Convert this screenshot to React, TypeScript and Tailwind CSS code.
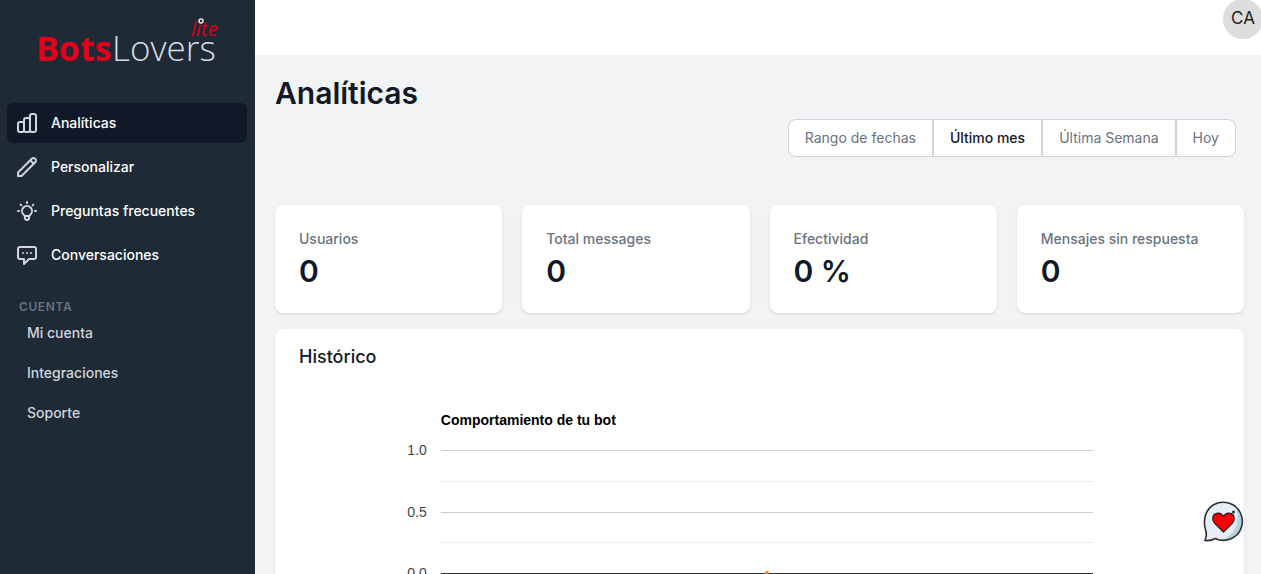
import React from 'react';
import {
  HiOutlineChartBar,
  HiOutlinePencil,
  HiOutlineLightBulb,
  HiOutlineChatAlt,
} from 'react-icons/hi';

const navigation = [
  { name: 'Analíticas', icon: HiOutlineChartBar, current: true },
  { name: 'Personalizar', icon: HiOutlinePencil, current: false },
  { name: 'Preguntas frecuentes', icon: HiOutlineLightBulb, current: false },
  { name: 'Conversaciones', icon: HiOutlineChatAlt, current: false },
];

const account = ['Mi cuenta', 'Integraciones', 'Soporte'];

const ranges = ['Rango de fechas', 'Último mes', 'Última Semana', 'Hoy'];

const stats = [
  { name: 'Usuarios', value: '0' },
  { name: 'Total messages', value: '0' },
  { name: 'Efectividad', value: '0 %' },
  { name: 'Mensajes sin respuesta', value: '0' },
];

const gridLines = [
  { y: 69, label: '1.0', color: '#cccccc' },
  { y: 100, label: '', color: '#ebebeb' },
  { y: 131, label: '0.5', color: '#cccccc' },
  { y: 161, label: '', color: '#ebebeb' },
  { y: 192, label: '0.0', color: '#333333' },
];

function Logo() {
  return (
    <svg width="190" height="56" className="block font-['Open_Sans',sans-serif]" role="img" aria-label="BotsLovers lite">
      <text x="1" y="47" fontSize="34" fontWeight="700" fill="#e2001a">Bots</text>
      <text x="77" y="47" fontSize="35" fontWeight="300" fill="#d9dde1">Lovers</text>
      <text x="156" y="22" fontSize="20" fontStyle="italic" fontWeight="400" fill="#d9001b">lite</text>
      <circle cx="166" cy="7" r="2" fill="#1f2937" stroke="#e5e7eb" strokeWidth="1.5" />
    </svg>
  );
}

function Sidebar() {
  return (
    <aside className="w-[255px] shrink-0 bg-[#1e2a35] pl-[7px] pr-2">
      <div className="h-[103px] pl-7 pt-[14px]">
        <Logo />
      </div>
      <nav className="space-y-1">
        {navigation.map((item) => (
          <a
            key={item.name}
            href="#"
            className={
              item.current
                ? 'flex items-center gap-3 rounded-md bg-[#111827] p-2 text-sm leading-6 font-medium text-white'
                : 'flex items-center gap-3 rounded-md p-2 text-sm leading-6 font-medium text-white'
            }
          >
            <item.icon className="h-6 w-6 text-[#d1d5db]" />
            {item.name}
          </a>
        ))}
      </nav>
      <h3 className="mt-6 px-3 text-xs font-semibold tracking-wider text-[#6b7280] uppercase">Cuenta</h3>
      <nav className="space-y-1 px-3">
        {account.map((name) => (
          <a key={name} href="#" className="block p-2 text-sm font-medium text-[#d1d5db]">
            {name}
          </a>
        ))}
      </nav>
    </aside>
  );
}

function HistoryChart() {
  return (
    <svg width="100%" height="260" className="block font-['Liberation_Sans',Arial,sans-serif]">
      <text x="15.4%" y="44" fontSize="14" fontWeight="700" fill="#000000">Comportamiento de tu bot</text>
      {gridLines.map((line) => (
        <g key={line.y}>
          <rect x="15.4%" y={line.y} width="70.8%" height="1" fill={line.color} />
          {line.label && (
            <text x="15.4%" dx="-14" y={line.y + 5} fontSize="14" textAnchor="end" fill="#444444">
              {line.label}
            </text>
          )}
        </g>
      ))}
      <circle cx="50.8%" cy="192" r="2" fill="#f3792b" />
    </svg>
  );
}

function ChatButton() {
  return (
    <button type="button" aria-label="Chat" className="fixed right-[17px] bottom-[31px] cursor-pointer">
      <svg width="42" height="42" viewBox="0 0 42 42" className="block">
        <path
          d="M3 39.500C4.500 36 5 33 3.500 28.500C0.500 18 4 8 12 3.500C22-1.500 34 2.500 38.500 12C43 22 39 33 29.500 37.500C24 40 18 39.800 13.500 37.500C10.500 39 7 40 3 39.500Z"
          fill="#e8eef5"
        />
        <path d="M33 6C43 14 42 29 31 36C28 38 24 39 20 39C34 33 39 19 33 6Z" fill="#b3d3df" />
        <path
          d="M3 39.500C4.500 36 5 33 3.500 28.500C0.500 18 4 8 12 3.500C22-1.500 34 2.500 38.500 12C43 22 39 33 29.500 37.500C24 40 18 39.800 13.500 37.500C10.500 39 7 40 3 39.500Z"
          fill="none"
          stroke="#2b2f33"
          strokeWidth="1.600"
          strokeLinejoin="round"
        />
        <path
          d="M21.500 31L12.500 22C9.500 18.500 10.500 13.500 14.500 12.500C17.500 11.700 20 13 21.500 15.500C23 13 25.500 11.700 28.500 12.500C32.500 13.500 33.500 18.500 30.500 22Z"
          fill="#fb0007"
          stroke="#3b1a1d"
          strokeWidth="1.300"
          strokeLinejoin="round"
        />
        <circle cx="31.500" cy="11" r="1.500" fill="#2b2f33" />
      </svg>
    </button>
  );
}

export default function App() {
  const [range, setRange] = React.useState('Último mes');

  return (
    <div className="flex h-screen overflow-hidden bg-[#f2f3f5] font-['Inter',sans-serif]">
      <Sidebar />
      <div className="flex min-w-0 flex-1 flex-col">
        <header className="flex h-[55px] shrink-0 justify-end overflow-hidden bg-white">
          <button
            type="button"
            className="-mt-px -mr-0.5 flex h-10 w-10 items-center justify-center rounded-full bg-[#dddddd] text-[17px] text-[#222222]"
          >
            CA
          </button>
        </header>

        <main className="flex-1 overflow-y-auto pt-5 pr-[17px] pl-5 [scrollbar-width:none]">
          <h1 className="text-3xl font-semibold text-[#111827]">Analíticas</h1>

          <div className="mt-2 mr-2 flex justify-end">
            <div className="flex divide-x-2 divide-[#d1d5db] overflow-hidden rounded-lg border border-[#d1d5db] bg-white">
              {ranges.map((name) => (
                <button
                  key={name}
                  type="button"
                  onClick={() => setRange(name)}
                  className={
                    name === range
                      ? 'px-4 py-2 text-sm font-medium text-[#111827]'
                      : 'px-4 py-2 text-sm text-[#6b7280]'
                  }
                >
                  {name}
                </button>
              ))}
            </div>
          </div>

          <dl className="mt-12 grid grid-cols-4 gap-5">
            {stats.map((stat) => (
              <div key={stat.name} className="rounded-lg bg-white p-6 shadow-sm">
                <dt className="truncate text-sm font-medium text-[#6b7280]">{stat.name}</dt>
                <dd className="mt-1 text-3xl font-semibold text-[#111827]">{stat.value}</dd>
              </div>
            ))}
          </dl>

          <section className="mt-4 rounded-lg bg-white px-6 py-4 shadow-sm">
            <h2 className="text-lg leading-6 font-medium text-[#111827]">Histórico</h2>
            <div className="mt-3">
              <HistoryChart />
            </div>
          </section>
        </main>
      </div>
      <ChatButton />
    </div>
  );
}
